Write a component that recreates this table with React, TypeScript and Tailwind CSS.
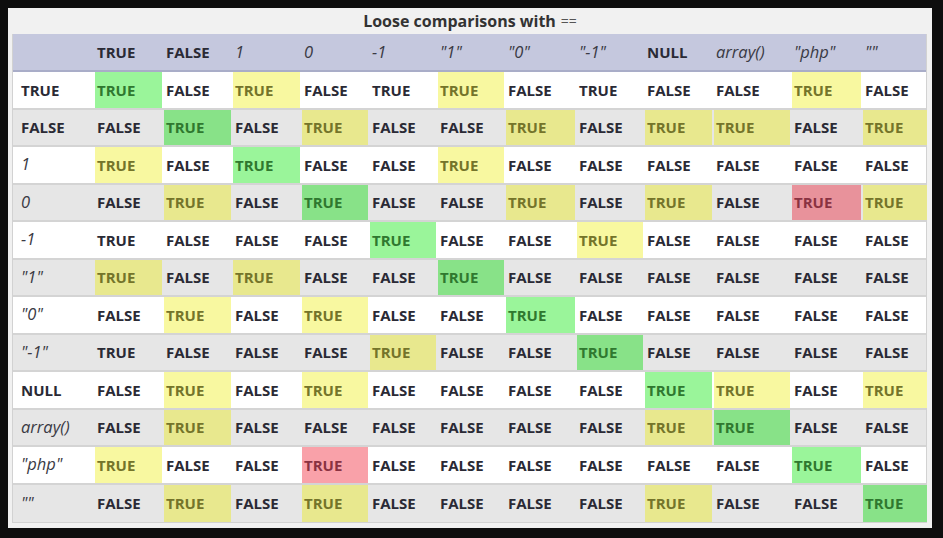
import React from 'react';

// Loose comparison table (PHP ==), rendered as a static grid.
// Cell codes: g = strict match, y = loose true, r = surprising true, t = plain TRUE, f = FALSE

type Label = { text: string; italic: boolean };

const COLS: Label[] = [
  { text: 'TRUE', italic: false },
  { text: 'FALSE', italic: false },
  { text: '1', italic: true },
  { text: '0', italic: true },
  { text: '-1', italic: true },
  { text: '"1"', italic: true },
  { text: '"0"', italic: true },
  { text: '"-1"', italic: true },
  { text: 'NULL', italic: false },
  { text: 'array()', italic: true },
  { text: '"php"', italic: true },
  { text: '""', italic: true },
];

const ROWS: string[] = [
  'gfyftyftffyf',
  'fgfyffyfyyfy',
  'yfgffyffffff',
  'fyfgffyfyfry',
  'tfffgffyffff',
  'yfyffgffffff',
  'fyfyffgfffff',
  'tfffyffgffff',
  'fyfyffffgyfy',
  'fyffffffygff',
  'yffrffffffgf',
  'fyfyffffyffg',
];

const WIDTHS = [
  'w-[69px]', 'w-[69px]', 'w-[69px]', 'w-[68px]', 'w-[68px]', 'w-[68px]',
  'w-[71px]', 'w-[68px]', 'w-[69px]', 'w-[78px]', 'w-[71px]', 'w-[66px]',
];

const LIGHT: Record<string, string> = {
  g: 'bg-[#9af59a] text-[#2f782f]',
  y: 'bg-[#f8f8a0] text-[#74742a]',
  r: 'bg-[#f9a1a9] text-[#8a3242]',
  t: 'text-[#2a2a35]',
  f: 'text-[#2a2a35]',
};

const DARK: Record<string, string> = {
  g: 'bg-[#88e288] text-[#2f782f]',
  y: 'bg-[#e8e88e] text-[#74742a]',
  r: 'bg-[#e8929b] text-[#8a3242]',
  t: 'text-[#2a2a35]',
  f: 'text-[#2a2a35]',
};

const labelClass = (l: Label) =>
  l.italic
    ? 'italic font-normal text-[16.5px] text-[#3a3a44]'
    : 'font-bold text-[15px] text-[#2a2a35]';

export default function App() {
  return (
    <div
      className="min-h-screen w-[943px] h-[538px] bg-[#0e0e0e] pt-[8px] pl-[8px]"
      style={{ fontFamily: '"Open Sans", "Noto Sans", sans-serif' }}
    >
      <div className="w-[924px] h-[520px] bg-[#f1f1f1] px-[4px]">
        {/* Caption */}
        <div className="h-[26px] flex items-center justify-center text-[16px] text-[#333] leading-none">
          <span className="font-bold">Loose comparisons with</span>
          <span className="ml-[5px] text-[#555] text-[14px]">==</span>
        </div>

        <div className="w-[915px] border-x border-b border-[#d2d2d2]">
          {/* Header row */}
          <div className="flex h-[38px] bg-[#c5c8de] border-b-2 border-[#a9adc8]">
            <div className="w-[81px] shrink-0" />
            {COLS.map((c, i) => (
              <div
                key={i}
                className={`${WIDTHS[i]} shrink-0 flex items-center pl-[3px] ${labelClass(c)}`}
              >
                {c.text}
              </div>
            ))}
          </div>

          {/* Data rows */}
          {ROWS.map((row, r) => {
            const odd = r % 2 === 1;
            const palette = odd ? DARK : LIGHT;
            return (
              <div
                key={r}
                className={`flex h-[37.5px] border-b-2 border-[#d4d4d4] last:border-b-0 ${
                  odd ? 'bg-[#e6e6e6]' : 'bg-white'
                }`}
              >
                <div
                  className={`w-[81px] shrink-0 flex items-center pl-[8px] ${labelClass(COLS[r])}`}
                >
                  {COLS[r].text}
                </div>
                {row.split('').map((code, c) => (
                  <div key={c} className={`${WIDTHS[c]} shrink-0 px-[1px]`}>
                    <div
                      className={`h-full flex items-center pl-[2px] font-bold text-[15px] ${palette[code]}`}
                    >
                      {code === 'f' ? 'FALSE' : 'TRUE'}
                    </div>
                  </div>
                ))}
              </div>
            );
          })}
        </div>
      </div>
    </div>
  );
}
